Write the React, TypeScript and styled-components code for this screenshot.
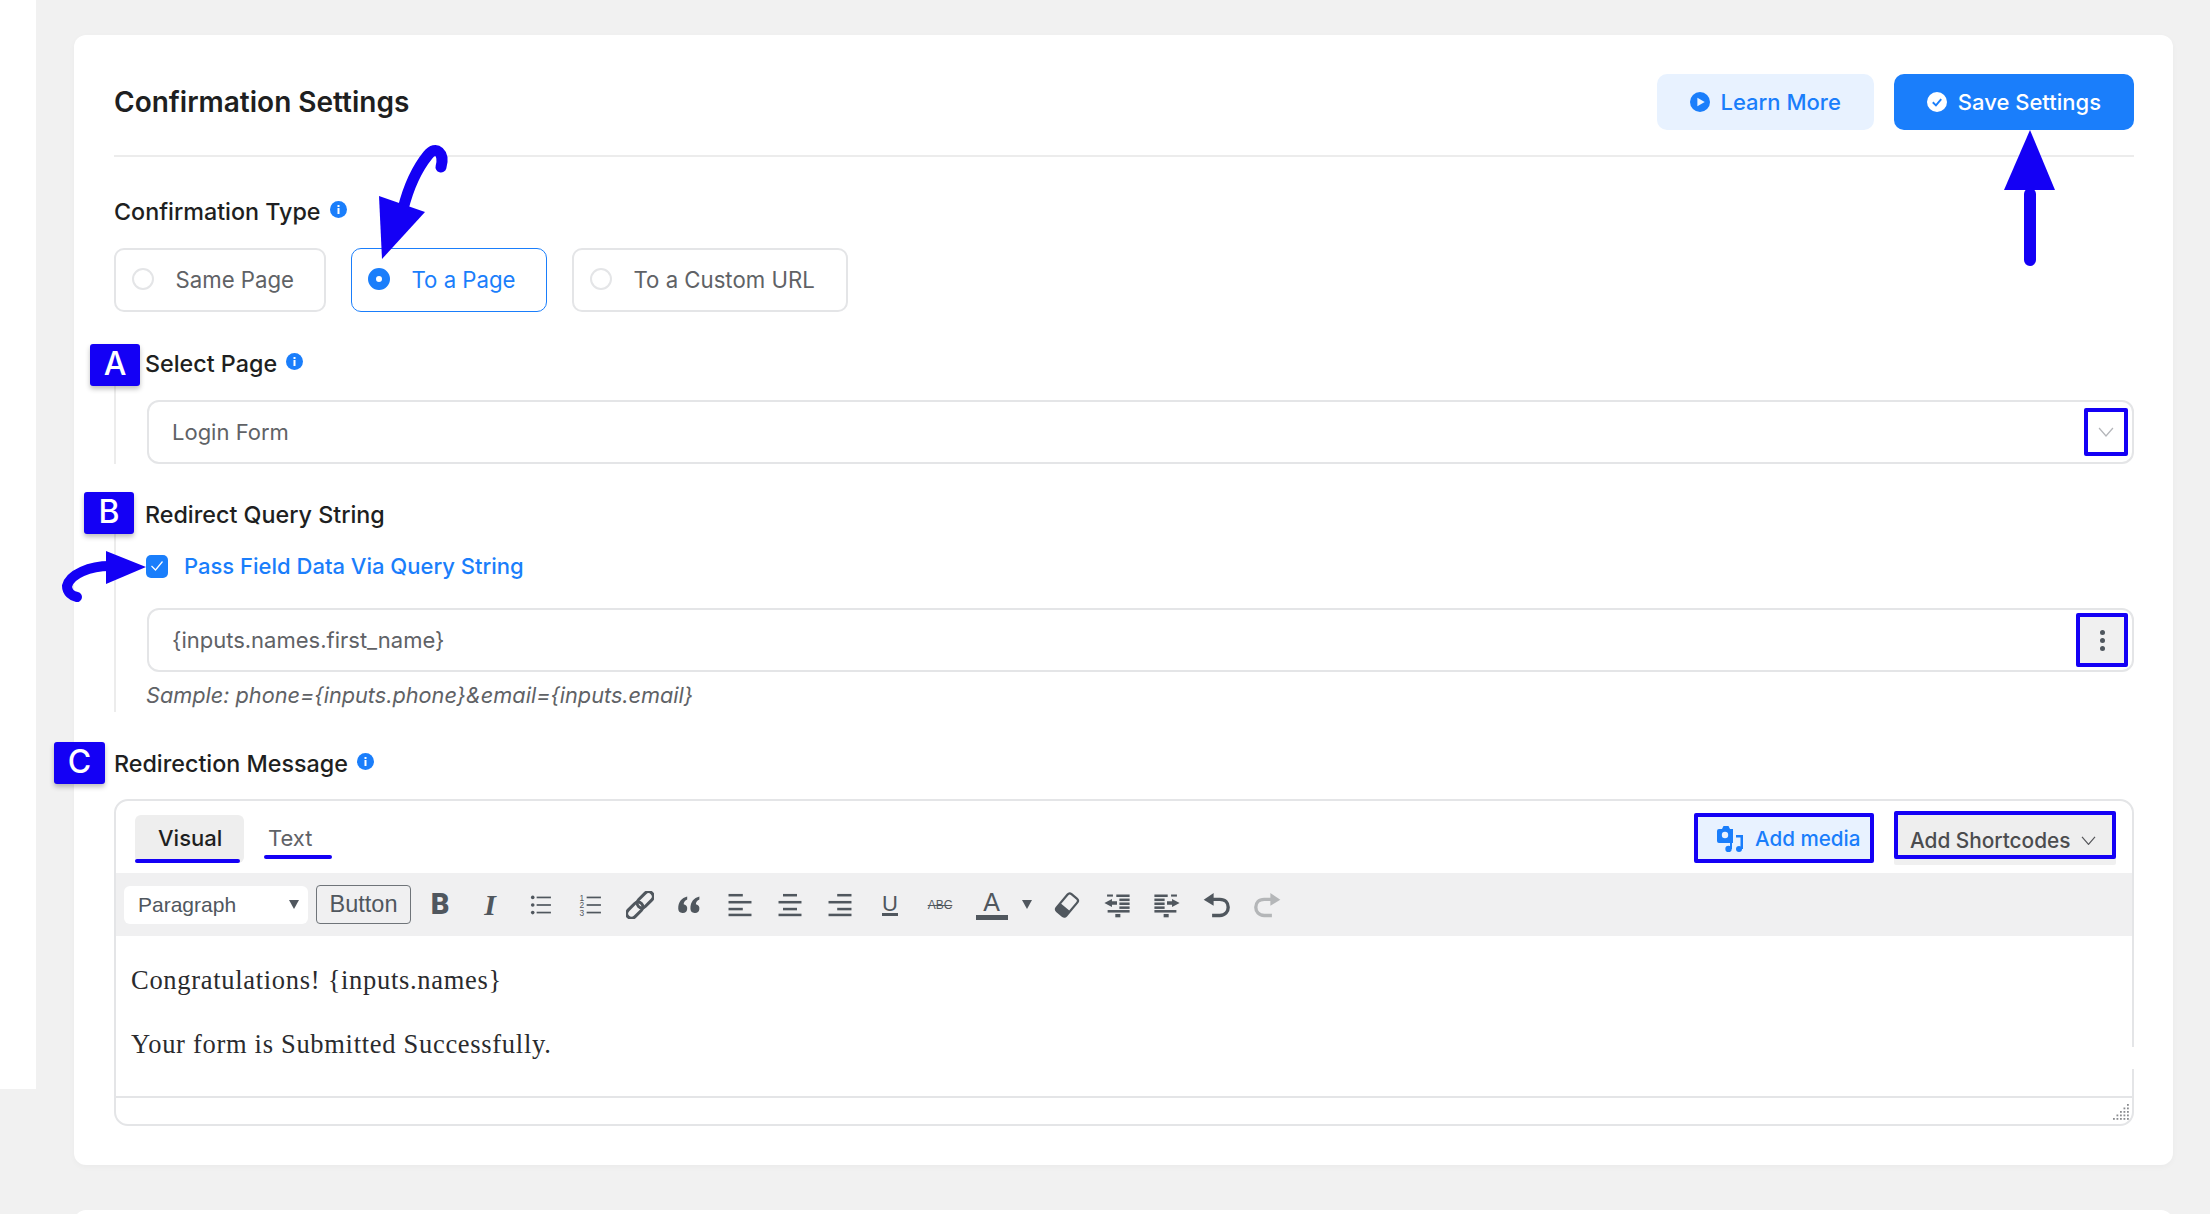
import React from 'react';
import styled, { createGlobalStyle } from 'styled-components';

const BLUE = '#1a7efb';
const MARK = '#1400f5';
const ICON = '#50575e';

const GlobalStyle = createGlobalStyle`
  html, body {
    margin: 0;
    padding: 0;
    background: #f1f1f1;
  }
  * {
    box-sizing: border-box;
  }
`;

const Page = styled.div`
  position: relative;
  display: flex;
  align-items: flex-start;
  width: 2210px;
  height: 1214px;
  overflow: hidden;
  background: #f1f1f1;
  font-family: Inter, 'Liberation Sans', sans-serif;
`;

const SideStrip = styled.div`
  flex: none;
  width: 36px;
  height: 1089px;
  background: #fff;
`;

const Main = styled.main`
  flex: none;
  width: 2099.5px;
  margin-left: 37.5px;
  padding-top: 35px;
`;

const Card = styled.section`
  height: 1130px;
  padding: 0 39px 0 40.5px;
  background: #fff;
  border-radius: 12px;
  box-shadow: 0 2px 6px rgba(0, 0, 0, 0.03);
`;

const NextCard = styled.div`
  height: 60px;
  margin-top: 45px;
  background: #fff;
  border-radius: 12px;
`;

const Header = styled.header`
  display: flex;
  align-items: center;
  justify-content: space-between;
  height: 122px;
  padding: 39px 0 26px;
  border-bottom: 2px solid #ececec;
`;

const Title = styled.h1`
  margin: 0;
  padding-top: 1px;
  font-size: 28px;
  font-weight: 600;
  color: #1e1f21;
`;

const HeaderActions = styled.div`
  display: flex;
  gap: 20px;
`;

const ActionButton = styled.button<{ $primary?: boolean }>`
  display: flex;
  align-items: center;
  gap: 11px;
  height: 56px;
  padding: 0 33px 0 33px;
  border: none;
  border-radius: 10px;
  font-family: inherit;
  font-size: 22px;
  font-weight: 500;
  color: ${(p) => (p.$primary ? '#fff' : BLUE)};
  background: ${(p) => (p.$primary ? BLUE : '#e8f2ff')};
`;

const Label = styled.div<{ $top: number; $indent?: number }>`
  display: flex;
  align-items: center;
  gap: 9px;
  height: 32px;
  margin-top: ${(p) => p.$top}px;
  margin-left: ${(p) => p.$indent || 0}px;
  font-size: 23.3px;
  font-weight: 500;
  color: #1e1f21;
`;

const RadioRow = styled.div`
  display: flex;
  gap: 25px;
  margin-top: 21px;
`;

const RadioBox = styled.div<{ $active?: boolean; $width: number }>`
  display: flex;
  align-items: center;
  gap: 21.5px;
  width: ${(p) => p.$width}px;
  height: 64px;
  padding: 0 0 2px 16px;
  border: ${(p) => (p.$active ? `1.5px solid ${BLUE}` : '2px solid #e4e5e7')};
  border-radius: 10px;
  font-size: 22.2px;
  color: ${(p) => (p.$active ? BLUE : '#606266')};
`;

const RadioDot = styled.span<{ $active?: boolean }>`
  flex: none;
  width: 22px;
  height: 22px;
  border-radius: 50%;
  border: ${(p) => (p.$active ? `8px solid ${BLUE}` : '2px solid #e4e5e7')};
  background: #fff;
`;

const Branch = styled.div<{ $top: number }>`
  margin-top: ${(p) => p.$top}px;
  padding-left: 31px;
  border-left: 2px solid #ececec;
`;

const Field = styled.div<{ $top: number }>`
  display: flex;
  align-items: center;
  justify-content: space-between;
  height: 64px;
  margin-top: ${(p) => p.$top}px;
  padding: 0 4px 0 23px;
  border: 2px solid #e4e5e7;
  border-radius: 12px;
  font-size: 22px;
  color: #606266;
`;

const MarkedBox = styled.div<{ $w: number; $h: number; $fill?: string }>`
  display: flex;
  flex-direction: column;
  align-items: center;
  justify-content: center;
  gap: 3px;
  width: ${(p) => p.$w}px;
  height: ${(p) => p.$h}px;
  border: 4px solid ${MARK};
  border-radius: 2px;
  background: ${(p) => p.$fill || 'transparent'};
`;

const KebabDot = styled.span`
  width: 5px;
  height: 5px;
  border-radius: 50%;
  background: #50575e;
`;

const CheckRow = styled.div`
  display: flex;
  align-items: center;
  gap: 16px;
  height: 32px;
  margin: 20px 0 0 -1px;
  font-size: 22px;
  font-weight: 500;
  color: ${BLUE};
`;

const CheckBox = styled.span`
  display: flex;
  align-items: center;
  justify-content: center;
  flex: none;
  width: 22px;
  height: 23px;
  border-radius: 5px;
  background: ${BLUE};
`;

const Hint = styled.p`
  height: 33px;
  margin: 7px 0 0 -1px;
  font-size: 21.7px;
  font-style: italic;
  line-height: 32px;
  color: #606266;
`;

const Editor = styled.div`
  position: relative;
  height: 327px;
  margin-top: 20px;
  border: 2px solid #e4e5e7;
  border-radius: 14px;
`;

const EditorTop = styled.div`
  display: flex;
  justify-content: space-between;
  height: 72px;
  padding: 10px 16px 0 19px;
`;

const Tabs = styled.div`
  display: flex;
  gap: 20px;
  padding-top: 4px;
`;

const Tab = styled.div<{ $active?: boolean }>`
  position: relative;
  width: ${(p) => (p.$active ? 109 : 68)}px;
  height: ${(p) => (p.$active ? 48 : 44)}px;
  padding: 10px 0 0 ${(p) => (p.$active ? 23 : 4)}px;
  border-radius: 6px;
  font-size: 22px;
  font-weight: ${(p) => (p.$active ? 500 : 400)};
  color: ${(p) => (p.$active ? '#1e1f21' : '#606266')};
  background: ${(p) => (p.$active ? '#eeeeee' : 'transparent')};
  &::after {
    content: '';
    position: absolute;
    left: 0;
    bottom: 0;
    width: ${(p) => (p.$active ? 105 : 68)}px;
    height: 4px;
    border-radius: 2px;
    background: ${MARK};
  }
`;

const EditorActions = styled.div`
  display: flex;
  gap: 20px;
`;

const MediaButton = styled.div`
  display: flex;
  align-items: center;
  gap: 11px;
  width: 180px;
  height: 50px;
  margin-top: 2px;
  padding-left: 19px;
  border: 4px solid ${MARK};
  border-radius: 2px;
  font-size: 20.6px;
  font-weight: 500;
  color: ${BLUE};
  background: #e8f2ff;
`;

const ShortcodeButton = styled.div`
  display: flex;
  align-items: center;
  gap: 11px;
  width: 222px;
  height: 48px;
  padding: 11px 0 0 12px;
  border: 4px solid ${MARK};
  border-radius: 2px;
  font-size: 20.8px;
  font-weight: 500;
  color: #4b4c4e;
  background: #eeeeee;
  box-shadow: 0 6px 0 #f0f0f0;
`;

const Toolbar = styled.div`
  display: flex;
  align-items: center;
  height: 63px;
  padding-left: 8px;
  background: #f0f0f1;
`;

const FormatSelect = styled.div`
  display: flex;
  align-items: center;
  justify-content: space-between;
  width: 184px;
  height: 38px;
  padding: 0 9px 0 14px;
  border-radius: 6px;
  background: #fff;
  font-family: 'Liberation Sans', Arial, sans-serif;
  font-size: 21px;
  color: #50575e;
`;

const Caret = styled.span`
  width: 0;
  height: 0;
  border-left: 5.5px solid transparent;
  border-right: 5.5px solid transparent;
  border-top: 9px solid ${ICON};
`;

const ToolbarButton = styled.div`
  display: flex;
  align-items: center;
  justify-content: center;
  width: 95px;
  height: 39px;
  margin: 0 4px 0 8px;
  border: 1.5px solid #6f7479;
  border-radius: 4px;
  font-family: 'Liberation Sans', Arial, sans-serif;
  font-size: 23.5px;
  color: #50575e;
`;

const Tool = styled.span<{ $w?: number }>`
  display: flex;
  align-items: center;
  justify-content: center;
  flex: none;
  gap: 14px;
  width: ${(p) => p.$w || 50}px;
  height: 40px;
  color: ${ICON};
`;

const BoldGlyph = styled.span`
  font-family: Roboto, sans-serif;
  font-size: 29px;
  font-weight: 900;
  line-height: 1;
`;

const ItalicGlyph = styled.span`
  font-family: 'Liberation Serif', serif;
  font-size: 30px;
  font-weight: 700;
  font-style: italic;
  line-height: 1;
`;

const UnderGlyph = styled.span`
  font-family: 'Liberation Sans', sans-serif;
  font-size: 22px;
  line-height: 19px;
  border-bottom: 3px solid ${ICON};
`;

const StrikeGlyph = styled.span`
  font-family: 'Liberation Sans', sans-serif;
  font-size: 12px;
  text-decoration: line-through;
`;

const ColorGlyph = styled.span`
  width: 32px;
  font-family: 'Liberation Sans', sans-serif;
  font-size: 25px;
  line-height: 25px;
  text-align: center;
  border-bottom: 5px solid ${ICON};
`;

const Content = styled.div`
  height: 160px;
  padding: 28px 0 0 15px;
  font-family: 'Liberation Serif', Georgia, serif;
  font-size: 26.5px;
  letter-spacing: 0.7px;
  line-height: 32px;
  color: #2a2b2e;
  & p {
    margin: 0 0 32px;
  }
`;

const StatusBar = styled.div`
  position: relative;
  height: 30px;
  border-top: 2px solid #e4e5e7;
`;

const Grip = styled.svg`
  position: absolute;
  right: 2px;
  bottom: 5px;
`;

// the screenshot has a few wiped spots on the editor border, keep them
const Smudge = styled.span<{ $right: number; $bottom: number; $w: number; $h: number }>`
  position: absolute;
  right: ${(p) => p.$right}px;
  bottom: ${(p) => p.$bottom}px;
  width: ${(p) => p.$w}px;
  height: ${(p) => p.$h}px;
  background: #fff;
`;

const Badge = styled.div<{ $x: number; $y: number; $w: number }>`
  position: absolute;
  left: ${(p) => p.$x}px;
  top: ${(p) => p.$y}px;
  display: flex;
  align-items: center;
  justify-content: center;
  width: ${(p) => p.$w}px;
  height: 42px;
  padding-bottom: 3px;
  border-radius: 3px;
  background: ${MARK};
  box-shadow: 0 3px 5px rgba(0, 0, 0, 0.25);
  font-size: 32px;
  font-weight: 500;
  color: #fff;
`;

const Overlay = styled.svg<{ $x: number; $y: number }>`
  position: absolute;
  left: ${(p) => p.$x}px;
  top: ${(p) => p.$y}px;
  overflow: visible;
`;

const InfoGlyph = styled.svg`
  margin-top: -4px;
`;

const InfoIcon = () => (
  <InfoGlyph width="17" height="17" viewBox="0 0 17 17">
    <circle cx="8.5" cy="8.5" r="8.5" fill={BLUE} />
    <rect x="7.5" y="7" width="2" height="6" fill="#fff" />
    <rect x="7.5" y="4" width="2" height="2" fill="#fff" />
  </InfoGlyph>
);

const Chevron = ({ color, size }: { color: string; size: number }) => (
  <svg width={size} height={size * 0.62} viewBox="0 0 16 10" fill="none">
    <path d="M1 1l7 8 7-8" stroke={color} strokeWidth="1.3" />
  </svg>
);

const Svg20 = ({ children, fill }: { children: React.ReactNode; fill?: string }) => (
  <svg width="28" height="28" viewBox="0 0 20 20" fill={fill || ICON}>
    {children}
  </svg>
);

const AlignIcon = ({ shortX, shortW }: { shortX: number; shortW: number }) => (
  <Svg20>
    <rect x={shortX} y="2.1" width={shortW} height="1.8" />
    <rect x="1.8" y="7.1" width="16.4" height="1.8" />
    <rect x={shortX} y="12" width={shortW} height="1.8" />
    <rect x="1.8" y="16.2" width="16.4" height="1.8" />
  </Svg20>
);

const IndentShape = () => (
  <>
    <rect x="2.9" y="2.5" width="4.2" height="1.5" />
    <rect x="9.5" y="2.5" width="9.5" height="1.8" />
    <rect x="11.7" y="5.4" width="7.3" height="1.8" />
    <rect x="11.7" y="8.2" width="7.3" height="1.8" />
    <rect x="11.7" y="11" width="7.3" height="1.8" />
    <rect x="3.3" y="13.6" width="15.7" height="1.8" />
    <rect x="8.8" y="16.4" width="3.6" height="2.4" />
    <path d="M1 8.6 6.4 5.8v1.6h3.6v2.4H6.4v1.6z" />
  </>
);

const UndoShape = ({ color }: { color: string }) => (
  <>
    <path d="M.5 6.2 7.6 1.4v9.1z" fill={color} />
    <path
      d="M6 6h6c4 0 6 2.6 6 5.6 0 3-2 5.9-6 5.9H6.5"
      fill="none"
      stroke={color}
      strokeWidth="2.4"
    />
  </>
);

const App: React.FC = () => {
  return (
    <Page>
      <GlobalStyle />
      <SideStrip />
      <Main>
        <Card>
          <Header>
            <Title>Confirmation Settings</Title>
            <HeaderActions>
              <ActionButton>
                <svg width="20" height="20" viewBox="0 0 19 19">
                  <circle cx="9.5" cy="9.5" r="9.5" fill={BLUE} />
                  <path d="M7 5.5l7 4-7 4z" fill="#e8f2ff" />
                </svg>
                Learn More
              </ActionButton>
              <ActionButton $primary>
                <svg width="20" height="20" viewBox="0 0 19 19" fill="none">
                  <circle cx="9.5" cy="9.5" r="9.5" fill="#fff" />
                  <path d="M5.5 9.7l3 3 5-6" stroke={BLUE} strokeWidth="1.8" />
                </svg>
                Save Settings
              </ActionButton>
            </HeaderActions>
          </Header>

          <Label $top={38}>
            Confirmation Type <InfoIcon />
          </Label>
          <RadioRow>
            <RadioBox $width={212}>
              <RadioDot />
              Same Page
            </RadioBox>
            <RadioBox $width={196} $active>
              <RadioDot $active />
              To a Page
            </RadioBox>
            <RadioBox $width={276}>
              <RadioDot />
              To a Custom URL
            </RadioBox>
          </RadioRow>

          <Branch $top={35}>
            <Label $top={0} $indent={-2}>
              Select Page <InfoIcon />
            </Label>
            <Field $top={21}>
              Login Form
              <MarkedBox $w={44} $h={48}>
                <Chevron color="#b4b6ba" size={16} />
              </MarkedBox>
            </Field>
          </Branch>

          <Branch $top={34}>
            <Label $top={0} $indent={-2}>
              Redirect Query String
            </Label>
            <CheckRow>
              <CheckBox>
                <svg width="14" height="12" viewBox="0 0 14 12" fill="none">
                  <path d="M1.5 6l4 4 7-8.5" stroke="#fff" strokeWidth="1.2" />
                </svg>
              </CheckBox>
              Pass Field Data Via Query String
            </CheckRow>
            <Field $top={26}>
              {'{inputs.names.first_name}'}
              <MarkedBox $w={52} $h={54} $fill="#f0f0f0">
                <KebabDot />
                <KebabDot />
                <KebabDot />
              </MarkedBox>
            </Field>
            <Hint>{'Sample: phone={inputs.phone}&email={inputs.email}'}</Hint>
          </Branch>

          <Label $top={35}>
            Redirection Message <InfoIcon />
          </Label>
          <Editor>
            <EditorTop>
              <Tabs>
                <Tab $active>Visual</Tab>
                <Tab>Text</Tab>
              </Tabs>
              <EditorActions>
                <MediaButton>
                  <svg width="27" height="27" viewBox="0 0 27 27" fill={BLUE}>
                    <path d="M2 4h3l1.5-3h5L13 4h3v14H2a2 2 0 0 1-2-2V6a2 2 0 0 1 2-2z" />
                    <circle cx="8" cy="10" r="3.2" fill="#e8f2ff" />
                    <path d="M19 10h7v14h-2.5V12.5H19z" />
                    <circle cx="22" cy="24" r="3" />
                    <path d="M15 16v8h-2V16z" />
                    <circle cx="11.5" cy="24" r="3.2" />
                  </svg>
                  Add media
                </MediaButton>
                <ShortcodeButton>
                  Add Shortcodes
                  <Chevron color="#55565a" size={15} />
                </ShortcodeButton>
              </EditorActions>
            </EditorTop>

            <Toolbar>
              <FormatSelect>
                Paragraph
                <Caret />
              </FormatSelect>
              <ToolbarButton>Button</ToolbarButton>
              <Tool>
                <BoldGlyph>B</BoldGlyph>
              </Tool>
              <Tool>
                <ItalicGlyph>I</ItalicGlyph>
              </Tool>
              <Tool>
                <Svg20>
                  <circle cx="4.8" cy="4.6" r="1.3" />
                  <circle cx="4.8" cy="10" r="1.3" />
                  <circle cx="4.8" cy="15.4" r="1.3" />
                  <rect x="7.6" y="4" width="10.2" height="1.2" />
                  <rect x="7.6" y="9.4" width="10.2" height="1.2" />
                  <rect x="7.6" y="14.8" width="10.2" height="1.2" />
                </Svg20>
              </Tool>
              <Tool>
                <Svg20>
                  <text x="2.5" y="6.8" fontSize="6" fontFamily="Liberation Sans">1</text>
                  <text x="2.5" y="12.4" fontSize="6" fontFamily="Liberation Sans">2</text>
                  <text x="2.5" y="18" fontSize="6" fontFamily="Liberation Sans">3</text>
                  <rect x="7.6" y="4" width="10.2" height="1.2" />
                  <rect x="7.6" y="9.4" width="10.2" height="1.2" />
                  <rect x="7.6" y="14.8" width="10.2" height="1.2" />
                </Svg20>
              </Tool>
              <Tool>
                <Svg20 fill="none">
                  <g transform="rotate(-45 10 10)" stroke={ICON} strokeWidth="2.2">
                    <rect x="-2" y="6.6" width="13.5" height="6.8" rx="3.4" />
                    <rect x="8.5" y="6.6" width="13.5" height="6.8" rx="3.4" />
                  </g>
                </Svg20>
              </Tool>
              <Tool>
                <Svg20>
                  <path d="M1.6 12.5C1.6 8 4 5 8 4v2C6 7 5.5 8 5.5 9.4a3.2 3.2 0 1 1-3.9 3.1z" />
                  <path d="M10.3 12.5c0-4.5 2.4-7.5 6.4-8.5v2c-2 1-2.500 2-2.500 3.400a3.200 3.200 0 1 1-3.900 3.100z" />
                </Svg20>
              </Tool>
              <Tool>
                <AlignIcon shortX={1.8} shortW={10.2} />
              </Tool>
              <Tool>
                <AlignIcon shortX={5} shortW={10} />
              </Tool>
              <Tool>
                <AlignIcon shortX={8} shortW={10.2} />
              </Tool>
              <Tool>
                <UnderGlyph>U</UnderGlyph>
              </Tool>
              <Tool>
                <StrikeGlyph>ABC</StrikeGlyph>
              </Tool>
              <Tool $w={77}>
                <ColorGlyph>A</ColorGlyph>
                <Caret />
              </Tool>
              <Tool>
                <Svg20 fill="none">
                  <g transform="rotate(40 10 10)">
                    <rect x="5.5" y="2" width="9" height="16" rx="2" stroke={ICON} strokeWidth="1.6" />
                    <rect x="5.5" y="12" width="9" height="6" rx="1" fill={ICON} />
                  </g>
                </Svg20>
              </Tool>
              <Tool>
                <Svg20>
                  <IndentShape />
                </Svg20>
              </Tool>
              <Tool>
                <Svg20>
                  <g transform="translate(20 0) scale(-1 1)">
                    <IndentShape />
                  </g>
                </Svg20>
              </Tool>
              <Tool>
                <Svg20 fill="none">
                  <UndoShape color={ICON} />
                </Svg20>
              </Tool>
              <Tool>
                <Svg20 fill="none">
                  <g transform="translate(20 0) scale(-1 1)">
                    <UndoShape color="#b4b6b8" />
                  </g>
                </Svg20>
              </Tool>
            </Toolbar>

            <Content>
              <p>{'Congratulations! {inputs.names}'}</p>
              <p>Your form is Submitted Successfully.</p>
            </Content>

            <StatusBar>
              <Grip width="18" height="18" viewBox="0 0 18 18" fill="#8a8c90">
                {[0, 1, 2, 3, 4].map((row) =>
                  Array.from({ length: row + 1 }).map((_, col) => (
                    <rect key={`${row}-${col}`} x={15 - col * 3.5} y={row * 3.5 + 1} width="1.8" height="1.8" />
                  ))
                )}
              </Grip>
            </StatusBar>
            <Smudge $right={16} $bottom={28} $w={46} $h={3} />
            <Smudge $right={-2} $bottom={55} $w={3} $h={22} />
          </Editor>
        </Card>
        <NextCard />
      </Main>

      <Badge $x={90} $y={344} $w={50}>A</Badge>
      <Badge $x={84} $y={492} $w={50}>B</Badge>
      <Badge $x={54} $y={742} $w={51}>C</Badge>

      {/* hand drawn arrows from the annotation layer */}
      <Overlay $x={379} $y={147} width="66" height="112" viewBox="0 0 66 112" fill={MARK}>
        <path d="M62 20C66 6 57 -2 49 8C36 24 29 42 24 62" fill="none" stroke={MARK} strokeWidth="11" strokeLinecap="round" />
        <path d="M0 49 46 65 3 112z" />
      </Overlay>
      <Overlay $x={2004} $y={130} width="51" height="136" viewBox="0 0 51 136" fill={MARK}>
        <path d="M26 0 51 60H0z" />
        <rect x="20" y="58" width="12" height="78" rx="6" />
      </Overlay>
      <Overlay $x={62} $y={551} width="84" height="50" viewBox="0 0 84 50" fill={MARK}>
        <path d="M48 15C28 15 8 23 5 35C5 41 10 45 15 46" fill="none" stroke={MARK} strokeWidth="10" strokeLinecap="round" />
        <path d="M44 0 84 16 44 33z" />
      </Overlay>
    </Page>
  );
};

export default App;
